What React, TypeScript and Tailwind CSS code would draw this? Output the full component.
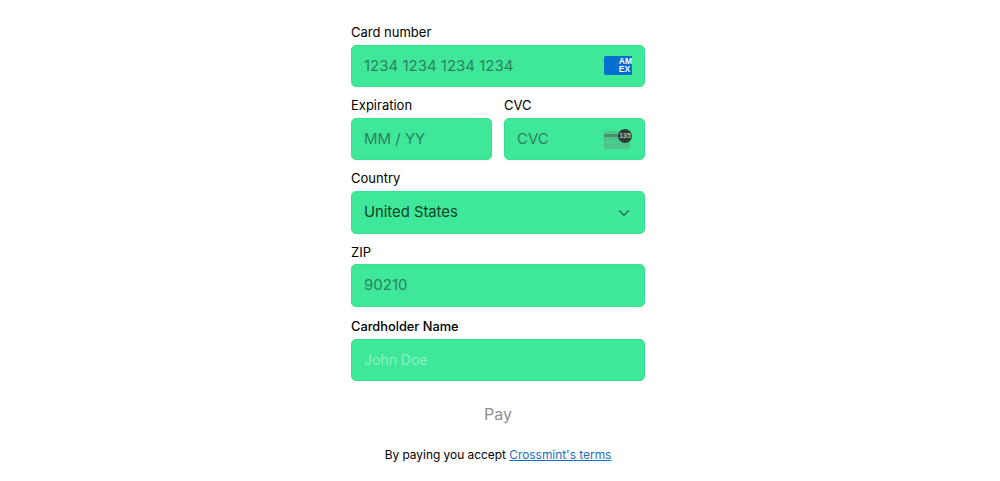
import { ChevronDown } from 'lucide-react';

const inputClass =
  'w-full h-full rounded-[5px] border border-[#38e092] bg-[#3ee898] pl-3 pr-3 pb-px text-[15px] text-[#30313d] outline-none shadow-[0_1px_1px_rgba(0,0,0,0.03)] placeholder:text-[#2f8060]';

function AmexIcon() {
  return (
    <div className="absolute right-[13px] top-[11px] flex h-[19px] w-[28px] justify-end overflow-hidden rounded-l-[2px] bg-[#016fd0]">
      <div className="mt-[2px] flex flex-col items-start font-['Liberation_Sans',sans-serif] text-[8.5px] font-bold leading-[7.5px] text-white">
        <span>AM</span>
        <span>EX</span>
      </div>
    </div>
  );
}

function CvcIcon() {
  return (
    <div className="absolute right-[13px] top-[11px] h-[21px] w-[28px]">
      <svg viewBox="0 0 28 21" className="h-full w-full">
        <rect x="0" y="2" width="26" height="18" rx="2" fill="#50c48b" />
        <rect x="0" y="5" width="26" height="3" fill="#42926e" />
        <rect x="2" y="12" width="22" height="2" fill="#3fd68f" />
      </svg>
      <div className="absolute right-0 top-0 flex h-[14px] w-[14px] items-center justify-center rounded-full bg-[#2d3e36] font-['Liberation_Sans',sans-serif] text-[7px] font-bold text-[#9fc4b2]">
        135
      </div>
    </div>
  );
}

export default function App() {
  return (
    <div className="flex h-[481px] w-full justify-center bg-white pr-1 font-['Inter',sans-serif]">
      <form className="flex w-[294px] flex-col pt-[22px]">
        <label className="mb-[3px] h-[20px] text-[13px] leading-[20px] text-black">Card number</label>
        <div className="relative h-[42px]">
          <input className={inputClass} placeholder="1234 1234 1234 1234" />
          <AmexIcon />
        </div>

        <div className="mt-[8px] grid grid-cols-2 gap-x-3">
          <div>
            <label className="mb-[3px] block h-[20px] text-[13px] leading-[20px] text-black">Expiration</label>
            <div className="h-[42px]">
              <input className={inputClass} placeholder="MM / YY" />
            </div>
          </div>
          <div>
            <label className="mb-[3px] block h-[20px] text-[13px] leading-[20px] text-black">CVC</label>
            <div className="relative h-[42px]">
              <input className={inputClass} placeholder="CVC" />
              <CvcIcon />
            </div>
          </div>
        </div>

        <label className="mb-[3px] mt-[8px] h-[20px] text-[13px] leading-[20px] text-black">Country</label>
        <div className="flex h-[43px] items-center justify-between rounded-[5px] border border-[#38e092] bg-[#3ee898] pl-3 pr-[11px] text-[14.8px] text-[#0c3f2a]">
          <span>United States</span>
          <ChevronDown className="h-[18px] w-[18px] text-[#1f6b4b]" strokeWidth={1.75} />
        </div>

        <label className="mb-[2px] mt-[8px] h-[20px] text-[13px] leading-[20px] text-black">ZIP</label>
        <div className="h-[43px] [&>input]:pb-[3px]">
          <input className={inputClass} placeholder="90210" />
        </div>

        <label className="mb-[2px] mt-[10px] h-[20px] text-[12.8px] font-medium leading-[20px] text-black">Cardholder Name</label>
        <div className="h-[42px]">
          <input
            className="h-full w-full rounded-[5px] border border-[#38e092] bg-[#3ee898] px-3 pb-[2px] text-[14px] outline-none placeholder:text-[#8af2c2]"
            placeholder="John Doe"
          />
        </div>

        <button type="button" className="mt-[20px] h-[27px] text-center text-[16px] leading-[27px] text-[#8f8f8f]">
          Pay
        </button>

        <p className="mt-[18px] text-center text-[11.9px] leading-[18px] text-black">
          By paying you accept{' '}
          <a href="#" className="text-[#1a6fc0] underline">
            Crossmint's terms
          </a>
        </p>
      </form>
    </div>
  );
}
